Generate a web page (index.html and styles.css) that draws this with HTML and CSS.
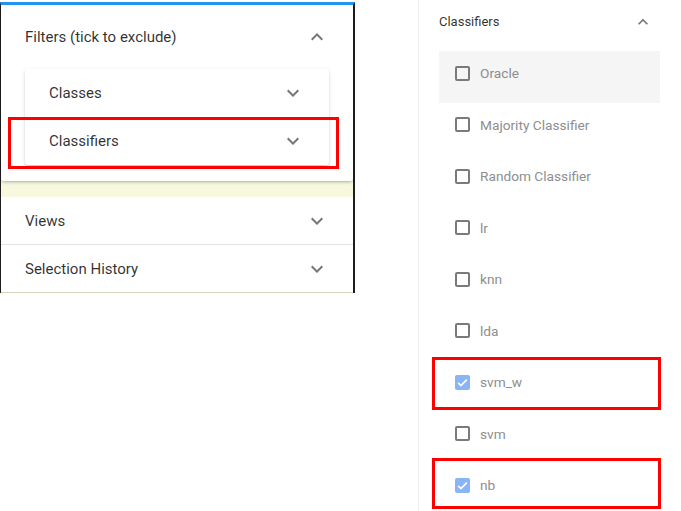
FILE: index.html
```html
<!DOCTYPE html>
<html>
<head>
<meta charset="utf-8">
<link rel="stylesheet" href="styles.css">
</head>
<body>
<div class="left">
  <div class="panel filters">
    <div class="hdr hdr-big">
      <span>Filters (tick to exclude)</span>
      <svg class="chev" viewBox="0 0 24 24"><path d="M12 8l-6 6 1.41 1.41L12 10.83l4.59 4.58L18 14z"/></svg>
    </div>
    <div class="filters-body">
      <div class="card">
        <div class="hdr inner">
          <span>Classes</span>
          <svg class="chev" viewBox="0 0 24 24"><path d="M16.59 8.59L12 13.17 7.41 8.59 6 10l6 6 6-6z"/></svg>
        </div>
        <div class="hdr inner">
          <span>Classifiers</span>
          <svg class="chev" viewBox="0 0 24 24"><path d="M16.59 8.59L12 13.17 7.41 8.59 6 10l6 6 6-6z"/></svg>
        </div>
      </div>
    </div>
  </div>
  <div class="panel group">
    <div class="hdr views">
      <span>Views</span>
      <svg class="chev" viewBox="0 0 24 24"><path d="M16.59 8.59L12 13.17 7.41 8.59 6 10l6 6 6-6z"/></svg>
    </div>
    <div class="hdr history">
      <span>Selection History</span>
      <svg class="chev" viewBox="0 0 24 24"><path d="M16.59 8.59L12 13.17 7.41 8.59 6 10l6 6 6-6z"/></svg>
    </div>
  </div>
</div>

<div class="right">
  <div class="rhdr">
    <span>Classifiers</span>
    <svg class="chev-sm" viewBox="0 0 24 24"><path d="M12 8l-6 6 1.41 1.41L12 10.83l4.59 4.58L18 14z"/></svg>
  </div>
  <div class="list">
    <div class="row hover"><span class="cb"></span><span class="lbl">Oracle</span></div>
    <div class="row"><span class="cb"></span><span class="lbl">Majority Classifier</span></div>
    <div class="row"><span class="cb"></span><span class="lbl">Random Classifier</span></div>
    <div class="row"><span class="cb"></span><span class="lbl">lr</span></div>
    <div class="row"><span class="cb"></span><span class="lbl">knn</span></div>
    <div class="row"><span class="cb"></span><span class="lbl">lda</span></div>
    <div class="row"><span class="cb on"><svg viewBox="0 0 24 24"><path d="M5 12.5l4.5 4.5L19 7.5" fill="none" stroke="#fff" stroke-width="2.6"/></svg></span><span class="lbl">svm_w</span></div>
    <div class="row"><span class="cb"></span><span class="lbl">svm</span></div>
    <div class="row"><span class="cb on"><svg viewBox="0 0 24 24"><path d="M5 12.5l4.5 4.5L19 7.5" fill="none" stroke="#fff" stroke-width="2.6"/></svg></span><span class="lbl">nb</span></div>
  </div>
</div>

<div class="mark mark-left"></div>
<div class="mark mark-svmw"></div>
<div class="mark mark-nb"></div>
</body>
</html>
```

FILE: styles.css
```css
html, body {
  margin: 0;
  padding: 0;
}
body {
  position: relative;
  width: 681px;
  height: 511px;
  overflow: hidden;
  background: #fff;
  display: flex;
  align-items: flex-start;
  font-family: Roboto, "Liberation Sans", sans-serif;
  color: rgba(0, 0, 0, 0.82);
}

.left {
  width: 352px;
  margin-top: 2px;
  border-top: 3px solid #2196f3;
  border-left: 1px solid #1e1e1e;
  border-right: 2px solid #1e1e1e;
  background: #f8f8de;
}

.panel {
  background: #fff;
}
.filters {
  margin-bottom: 16px;
  border-radius: 0 0 3px 3px;
  box-shadow: 0 2px 3px -1px rgba(0,0,0,0.22), 0 1px 4px rgba(0,0,0,0.10);
}

.hdr {
  display: flex;
  align-items: center;
  justify-content: space-between;
  padding: 0 24px;
  font-size: 15px;
  height: 48px;
  box-sizing: border-box;
}
.hdr-big {
  height: 64px;
}
.chev {
  width: 24px;
  height: 24px;
  fill: #757575;
  flex: none;
}

.filters-body {
  padding: 0 24px 16px;
}
.card {
  background: #fff;
  border-radius: 3px;
  box-shadow: 0 2px 3px -1px rgba(0,0,0,0.25), 0 1px 4px rgba(0,0,0,0.10);
}

.views {
  height: 47px;
}
.history {
  border-top: 1px solid #e4e4e4;
  border-bottom: 1px solid #d6d6c0;
  height: 49px;
}

.right {
  margin-left: 63px;
  width: 262px;
  height: 511px;
  border-left: 1px solid #efefef;
}
.rhdr {
  height: 42px;
  display: flex;
  align-items: center;
  justify-content: space-between;
  padding: 0 28px 0 20px;
  font-size: 13px;
}
.chev-sm {
  width: 20px;
  height: 20px;
  fill: #757575;
  margin-top: 1px;
}
.list {
  padding-top: 9px;
}
.row {
  margin-left: 20px;
  width: 221px;
  height: 51.5px;
  box-sizing: border-box;
  padding: 0 0 7px 16px;
  display: flex;
  align-items: center;
}
.row.hover {
  background: #f5f5f5;
}
.cb {
  width: 15px;
  height: 15px;
  box-sizing: border-box;
  border: 2px solid #7a7a7a;
  border-radius: 2px;
  flex: none;
  margin-right: 10px;
  display: flex;
}
.cb.on {
  border: none;
  background: #8ab4f8;
}
.cb svg {
  width: 15px;
  height: 15px;
}
.lbl {
  font-size: 13.7px;
  color: #8e8e8e;
}

.mark {
  position: absolute;
  box-sizing: border-box;
  border: 3px solid #ff0000;
}
.mark-left {
  left: 8px;
  top: 117px;
  width: 331px;
  height: 52px;
}
.mark-svmw {
  left: 432px;
  top: 357px;
  width: 229px;
  height: 53px;
}
.mark-nb {
  left: 432px;
  top: 458px;
  width: 229px;
  height: 51px;
}
```
